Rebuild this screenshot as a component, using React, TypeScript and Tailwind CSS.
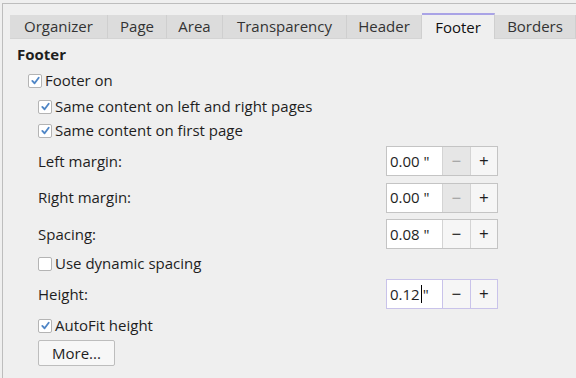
import React from "react";

const TABS = ["Organizer", "Page", "Area", "Transparency", "Header", "Footer", "Borders"];
const TAB_W = [98, 59, 56, 124, 75, 73, 81];

function Check({ checked, label, indent }: { checked: boolean; label: string; indent: string }) {
  return (
    <div className={`flex h-[25px] items-center ${indent}`}>
      <span className="mr-[3px] flex h-[14px] w-[14px] flex-none items-center justify-center rounded-[2px] border border-[#b4b4b4] bg-white">
        {checked && (
          <svg width="11" height="11" viewBox="0 0 12 12" fill="none" stroke="#4f86c6" strokeWidth="2" strokeLinecap="round" strokeLinejoin="round">
            <path d="M2.5 6.5 5 9l4.5-6" />
          </svg>
        )}
      </span>
      <span>{label}</span>
    </div>
  );
}

function Spin({ value, minusOff, focused, cursor }: { value: string; minusOff?: boolean; focused?: boolean; cursor?: boolean }) {
  const line = focused ? "border-[#c9c3ea]" : "border-[#d4d4d4]";
  return (
    <div className={`flex h-[30px] w-[112px] border ${focused ? "border-[#c9c3ea]" : "border-[#c4c4c4]"} bg-white`}>
      <div className="flex w-[56px] items-center pl-[3px]">
        {cursor ? (
          <>
            <span>{value}</span>
            <span className="mx-px h-[18px] w-px bg-black" />
            <span>"</span>
          </>
        ) : (
          <span>{value} "</span>
        )}
      </div>
      <div
        className={`flex w-[28px] items-center justify-center border-l ${line} ${
          minusOff ? "bg-[#e6e6e6] text-[#9a9a9a]" : "bg-[#f6f6f6] text-black"
        } text-[17px]`}
      >
        −
      </div>
      <div className={`flex w-[28px] items-center justify-center border-l ${line} bg-[#f6f6f6] text-[17px]`}>+</div>
    </div>
  );
}

function Row({ label, children, h }: { label: string; children: React.ReactNode; h: string }) {
  return (
    <div className={`flex items-center ${h} pl-[25px]`}>
      <span className="w-[348px]">{label}</span>
      {children}
    </div>
  );
}

export default function App() {
  return (
    <div
      className="h-[378px] w-[576px] overflow-hidden bg-[#efefef] pl-[2px] pt-[3px] text-[15px] text-[#1e1e1e]"
      style={{ fontFamily: '"Open Sans", "Noto Sans", sans-serif' }}
    >
      <div className="h-full border-l border-t border-[#bdbdbd] pl-[7px] pt-[9px]">
        <div className="flex h-[26px]">
          {TABS.map((t, i) => {
            const active = t === "Footer";
            return (
              <div
                key={t}
                style={{ width: TAB_W[i] }}
                className={`flex flex-none items-center justify-center border-r border-[#cfcfcf] ${
                  active ? "border-t-2 border-t-[#a9a3e6] bg-[#efefef] text-[#111]" : "mt-[2px] border-b border-b-[#d4d4d4] bg-[#dcdcdc] text-[#333]"
                }`}
              >
                {t}
              </div>
            );
          })}
        </div>
        <div className="pl-[7px]">
          <div className="flex h-[30px] items-center font-bold">Footer</div>
          <Check checked label="Footer on" indent="pl-[11px] -mt-[1px]" />
          <Check checked label="Same content on left and right pages" indent="pl-[21px] mt-[1px]" />
          <Check checked label="Same content on first page" indent="pl-[21px] -mt-[1px]" />
          <div className="-ml-[4px]">
            <Row label="Left margin:" h="h-[36px]">
              <Spin value="0.00" minusOff />
            </Row>
            <Row label="Right margin:" h="h-[37px]">
              <Spin value="0.00" minusOff />
            </Row>
            <Row label="Spacing:" h="h-[36px]">
              <Spin value="0.08" />
            </Row>
          </div>
          <Check checked={false} label="Use dynamic spacing" indent="pl-[21px] -mt-[1px]" />
          <div className="-ml-[4px]">
            <Row label="Height:" h="h-[36px]">
              <Spin value="0.12" focused cursor />
            </Row>
          </div>
          <Check checked label="AutoFit height" indent="pl-[21px] mt-[1px]" />
          <div className="pl-[21px] pt-[2px]">
            <button className="flex h-[26px] w-[77px] items-center justify-center rounded-[2px] border border-[#bdbdbd] bg-[#f7f7f7]">
              More...
            </button>
          </div>
        </div>
      </div>
    </div>
  );
}
